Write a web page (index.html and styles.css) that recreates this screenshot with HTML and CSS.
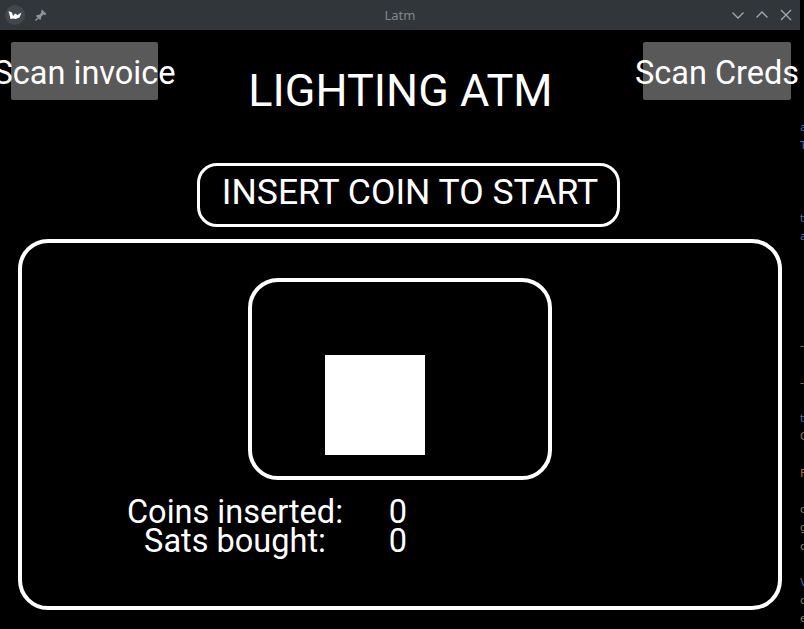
FILE: index.html
```html
<!DOCTYPE html>
<html>
<head>
<meta charset="utf-8">
<title>Latm</title>
<link rel="stylesheet" href="styles.css">
</head>
<body>
<div class="desk">
  <div class="window">
    <div class="titlebar">
      <div class="tb-left">
        <svg class="appicon" width="22" height="22" viewBox="0 0 22 22">
          <circle cx="11" cy="11" r="10" fill="#41474c"/>
          <path d="M4.5 7 L8 8.5 L9 12 L11 9.5 L13.5 11 L17.5 8.5 L15.5 13.5 L11.5 15 L9 14.5 L6.5 15 Z" fill="#ffffff"/>
        </svg>
        <svg class="pin" width="14" height="14" viewBox="0 0 14 14">
          <path d="M8 1.5 L12.5 6 L11 7 L9.5 6.5 L7 9 L7 11 L6 12 L2 8 L3 7 L5 7 L7.5 4.5 L7 3 Z" fill="#8c9399"/>
          <path d="M4 10 L1.5 12.5" stroke="#8c9399" stroke-width="1.4"/>
        </svg>
      </div>
      <div class="tb-title">Latm</div>
      <div class="tb-right">
        <svg width="14" height="10" viewBox="0 0 14 10"><path d="M1.5 2.5 L7 8 L12.5 2.5" fill="none" stroke="#a3a9ae" stroke-width="1.3"/></svg>
        <svg width="14" height="10" viewBox="0 0 14 10"><path d="M1.5 7.5 L7 2 L12.5 7.5" fill="none" stroke="#a3a9ae" stroke-width="1.3"/></svg>
        <svg width="14" height="14" viewBox="0 0 14 14"><path d="M2 2 L12 12 M12 2 L2 12" fill="none" stroke="#a3a9ae" stroke-width="1.3"/></svg>
      </div>
    </div>
    <div class="content">
      <div class="header">
        <div class="btn"><span>Scan invoice</span></div>
        <div class="title">LIGHTING ATM</div>
        <div class="btn"><span>Scan Creds</span></div>
      </div>
      <div class="prompt">INSERT COIN TO START</div>
      <div class="panel">
        <div class="viewer">
          <div class="square"></div>
        </div>
        <div class="stats">
          <div class="label">Coins inserted:</div><div class="value">0</div>
          <div class="label">Sats bought:</div><div class="value">0</div>
        </div>
      </div>
    </div>
  </div>
  <div class="peek">
    <div class="blue">a</div>
    <div class="blue">T</div>
    <div>&nbsp;</div>
    <div>&nbsp;</div>
    <div>&nbsp;</div>
    <div class="blue">t</div>
    <div class="blue">a</div>
    <div>&nbsp;</div>
    <div>&nbsp;</div>
    <div>&nbsp;</div>
    <div>&nbsp;</div>
    <div>&nbsp;</div>
    <div class="grey">-</div>
    <div>&nbsp;</div>
    <div class="grey">-</div>
    <div>&nbsp;</div>
    <div class="blue">t</div>
    <div class="brown">G</div>
    <div>&nbsp;</div>
    <div class="orange">F</div>
    <div>&nbsp;</div>
    <div class="olive">c</div>
    <div class="olive">g</div>
    <div class="olive">c</div>
    <div>&nbsp;</div>
    <div class="blue">V</div>
    <div class="olive">c</div>
    <div class="olive">e</div>
  </div>
</div>
</body>
</html>
```

FILE: styles.css
```css
* { box-sizing: border-box; }
html, body {
  margin: 0;
  padding: 0;
  background: #000;
}
body {
  width: 804px;
  height: 629px;
  overflow: hidden;
  font-family: Roboto, "Liberation Sans", sans-serif;
  color: #fff;
}
.desk {
  display: flex;
  height: 629px;
}
.window {
  width: 800px;
  height: 629px;
  display: flex;
  flex-direction: column;
  background: #000;
}
.titlebar {
  height: 30px;
  flex: none;
  background: #31363b;
  display: grid;
  grid-template-columns: 1fr auto 1fr;
  align-items: center;
}
.tb-left {
  display: flex;
  align-items: center;
  gap: 8px;
  padding-left: 4px;
}
.tb-title {
  font-family: "Noto Sans", "DejaVu Sans", sans-serif;
  font-size: 13px;
  color: #80878c;
}
.tb-right {
  display: flex;
  justify-content: flex-end;
  align-items: center;
  gap: 10px;
  padding-right: 7px;
}
.content {
  flex: 1;
  display: flex;
  flex-direction: column;
}
.header {
  display: grid;
  grid-template-columns: 147px 1fr 148px;
  height: 100px;
  padding: 12px 9px 0 11px;
  align-items: start;
}
.btn {
  height: 58px;
  background: #595959;
  border-radius: 2px;
  display: flex;
  align-items: center;
  justify-content: center;
  overflow: visible;
  padding-top: 4px;
}
.btn span {
  font-size: 32.5px;
  line-height: 32px;
  white-space: nowrap;
}
.title {
  text-align: center;
  font-size: 45px;
  line-height: 45px;
  margin-top: 26px;
  white-space: nowrap;
}
.prompt {
  margin: 33px 0 0 197px;
  width: 423px;
  height: 64px;
  border: 3px solid #fff;
  border-radius: 20px;
  display: flex;
  align-items: center;
  justify-content: center;
  font-size: 35.5px;
  line-height: 36px;
  padding-bottom: 7px;
  padding-left: 3px;
  white-space: nowrap;
}
.panel {
  margin: 12px 0 0 18px;
  width: 764px;
  height: 371px;
  border: 4px solid #fff;
  border-radius: 30px;
  padding-top: 35px;
}
.viewer {
  margin: 0 auto;
  width: 304px;
  height: 202px;
  border: 4px solid #fff;
  border-radius: 30px;
  padding: 73px 0 0 73px;
}
.square {
  width: 100px;
  height: 100px;
  background: #fff;
}
.stats {
  display: grid;
  grid-template-columns: 240px 86px;
  margin: 18px 0 0 93px;
  font-size: 32.5px;
  line-height: 29px;
}
.label, .value {
  text-align: center;
  white-space: nowrap;
}
.peek {
  width: 4px;
  height: 629px;
  overflow: hidden;
  background: #000;
  padding-top: 119px;
  font-family: "DejaVu Sans", sans-serif;
  font-size: 11px;
  line-height: 18.2px;
  white-space: nowrap;
}
.peek .blue { color: #3f6fae; }
.peek .grey { color: #7b7f83; }
.peek .brown { color: #8a6a55; }
.peek .orange { color: #b8683f; }
.peek .olive { color: #7f7d6a; }
```
